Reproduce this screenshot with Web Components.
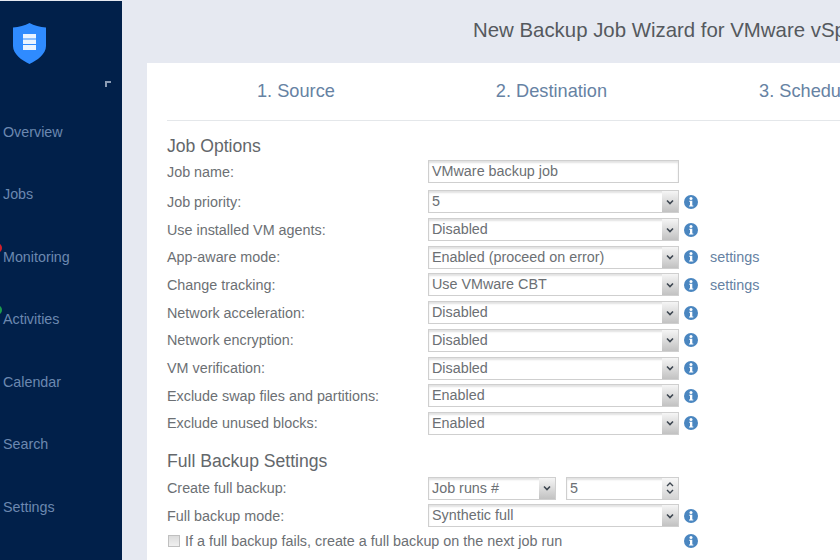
<!DOCTYPE html>
<html><head><meta charset="utf-8"><style>
html,body{margin:0;height:100%;overflow:hidden;background:#e6e9f1}
body{width:840px;height:560px;font-family:"Liberation Sans",Arial,sans-serif}
</style></head><body>
<wizard-app></wizard-app>
<template id="t-app"><style>
:host{display:flex;width:840px;height:560px;overflow:hidden}
.main{flex:none;width:718px;display:flex;flex-direction:column;overflow:hidden}
h1{margin:0;height:63px;box-sizing:border-box;padding:18px 0 0 351px;font:400 20.4px/24px "Liberation Sans",Arial,sans-serif;color:#55595e;white-space:nowrap}
.card{flex:1;background:#fff;margin-left:25px;width:900px;padding:0 0 0 20px;box-sizing:border-box}
</style><side-nav></side-nav><div class="main"><h1>New Backup Job Wizard for VMware vSphere</h1>
<div class="card"><step-tabs></step-tabs>
<form-title style="margin-top:14px;height:23px">Job Options</form-title>
<form-row label="Job name:" kind="input" value="VMware backup job" style="margin-bottom:2.4px"></form-row>
<form-row label="Job priority:" kind="select" value="5" info></form-row>
<form-row label="Use installed VM agents:" kind="select" value="Disabled" info></form-row>
<form-row label="App-aware mode:" kind="select" value="Enabled (proceed on error)" info settings></form-row>
<form-row label="Change tracking:" kind="select" value="Use VMware CBT" info settings></form-row>
<form-row label="Network acceleration:" kind="select" value="Disabled" info></form-row>
<form-row label="Network encryption:" kind="select" value="Disabled" info></form-row>
<form-row label="VM verification:" kind="select" value="Disabled" info></form-row>
<form-row label="Exclude swap files and partitions:" kind="select" value="Enabled" info></form-row>
<form-row label="Exclude unused blocks:" kind="select" value="Enabled" info></form-row>
<form-title style="margin-top:13px;height:24px">Full Backup Settings</form-title>
<form-row label="Create full backup:" kind="pair" value="Job runs #" num="5"></form-row>
<form-row label="Full backup mode:" kind="select" value="Synthetic full" info></form-row>
<check-row>If a full backup fails, create a full backup on the next job run</check-row>
</div></div></template>

<template id="t-nav"><style>
:host{display:flex;flex-direction:column;flex:none;width:122px;height:560px;background:#01204a;position:relative;font-size:14.3px;color:#6c88b0;overflow:hidden;box-sizing:border-box;border-top:1px solid #e6e9f1}
.logo{height:99.5px;box-sizing:border-box;padding:22px 0 0 13px}
.col{position:absolute;left:105px;top:80px;width:6px;height:6px}
a{display:block;height:62.5px;line-height:62px;padding-left:3px;position:relative}
a.d::before{content:"";position:absolute;left:-8px;top:17px;width:10px;height:10px;border-radius:50%}
a.r::before{background:#d3202c}a.g::before{background:#1c9c4c}
</style><div class="logo"><svg width="33" height="41" viewBox="0 0 33 41" style="display:block"><path d="M16.5 0 C21 2.5 27 4 33 4.500 V23 C33 31 24 37.500 16.500 41 C9 37.500 0 31 0 23 V4.500 C6 4 12 2.500 16.500 0 Z" fill="#2f8bff"/><path d="M10 11h13v4.500H10zM10 16.500h13v4.500H10zM10 22h13v5H10z" fill="#eaf3ff"/></svg></div>
<svg class="col" viewBox="0 0 6 6"><path d="M0 0H6V2H2V6H0Z" fill="#8b9cb5"/></svg>
<a>Overview</a><a>Jobs</a><a class="d r">Monitoring</a><a class="d g">Activities</a><a>Calendar</a><a>Search</a><a>Settings</a></template>

<template id="t-tabs"><style>
:host{display:flex;height:57px;width:693px;border-bottom:1px solid #e4e7ea;font-size:18.2px;color:#6682a3;white-space:nowrap}
span{display:block;padding-top:18px}
</style><span style="margin-left:90px">1. Source</span><span style="margin-left:161px">2. Destination</span><span style="margin-left:152px">3. Schedule</span></template>

<template id="t-title"><style>:host{display:block;font-size:17.6px;line-height:22px;color:#63676b}</style><slot></slot></template>

<template id="t-row"><style>
:host{display:flex;align-items:center;height:27.7px;font-size:14.35px;color:#6c7074;white-space:nowrap}
.l{width:261px;flex:none}
.box{box-sizing:border-box;height:23px;border:1px solid #cfcfcf;background:#fff;box-shadow:inset 0 2px 2px #e2e2e2;padding:0 3px;line-height:21px;color:#6c7074;display:flex;justify-content:space-between;overflow:hidden}
.arr{flex:none;width:16px;height:21px;margin-right:-3px;background:linear-gradient(#f5f5f5,#c2c2c2);display:flex;align-items:center;justify-content:center}
.i{margin-left:5px;flex:none;display:block}
.s{margin-left:12px;color:#6682a3}
.sp{width:16px;margin-right:-3px;background:linear-gradient(#f7f7f7,#d4d4d4);display:flex;flex-direction:column;align-items:center;justify-content:center;gap:2px}
</style><div class="l"></div><div id="c" style="display:flex;align-items:center"></div></template>

<template id="t-check"><style>
:host{display:flex;align-items:center;height:22px;width:531px;font-size:14.35px;color:#6c7074;white-space:nowrap}
.b{box-sizing:border-box;width:12px;height:12px;margin-left:1px;border:1px solid #c0c0c0;background:linear-gradient(#dcdcdc,#f0f0f0);margin-right:5px;flex:none}
.t{flex:1}
</style><div class="b"></div><div class="t"><slot></slot></div><svg width="14" height="14" viewBox="0 0 14 14"><circle cx="7" cy="7" r="7" fill="#4a86c0"/><circle cx="7" cy="3.4" r="1.5" fill="#fff"/><path d="M5.2 5.800H8.300V10.600H9.300V11.600H5V10.600H6V6.800H5.200Z" fill="#fff"/></svg></template>

<script>
const INFO='<svg class="i" width="14" height="14" viewBox="0 0 14 14"><circle cx="7" cy="7" r="7" fill="#4a86c0"/><circle cx="7" cy="3.4" r="1.5" fill="#fff"/><path d="M5.2 5.8H8.3V10.6H9.3V11.6H5V10.6H6V6.8H5.2Z" fill="#fff"/></svg>';
const CH='<svg width="8" height="6" viewBox="0 0 8 6"><path d="M1 1.5L4 4.5L7 1.5" fill="none" stroke="#3d4650" stroke-width="1.6"/></svg>';
const mk=(n,id,init)=>customElements.define(n,class extends HTMLElement{connectedCallback(){if(this.shadowRoot)return;const r=this.attachShadow({mode:'open'});r.appendChild(document.getElementById(id).content.cloneNode(true));init&&init.call(this,r)}});
mk('side-nav','t-nav');mk('step-tabs','t-tabs');mk('form-title','t-title');mk('check-row','t-check');
mk('form-row','t-row',function(r){
 r.querySelector('.l').textContent=this.getAttribute('label');
 const k=this.getAttribute('kind'),v=this.getAttribute('value'),c=r.getElementById('c');let h='';
 if(k==='input')h=`<div class="box" style="width:251px">${v}</div>`;
 if(k==='select')h=`<div class="box" style="width:251px"><span>${v}</span><div class="arr">${CH}</div></div>`;
 if(k==='pair')h=`<div class="box" style="width:128px"><span>${v}</span><div class="arr">${CH}</div></div><div class="box" style="width:113px;margin-left:10px"><span>${this.getAttribute('num')}</span><div class="sp"><svg width="8" height="5" viewBox="0 0 8 5"><path d="M1 4L4 1L7 4" fill="none" stroke="#3d4650" stroke-width="1.4"/></svg><svg width="8" height="5" viewBox="0 0 8 5"><path d="M1 1L4 4L7 1" fill="none" stroke="#3d4650" stroke-width="1.4"/></svg></div></div>`;
 if(this.hasAttribute('info'))h+=INFO;
 if(this.hasAttribute('settings'))h+='<span class="s">settings</span>';
 c.innerHTML=h;
});
mk('wizard-app','t-app');
</script></body></html>
